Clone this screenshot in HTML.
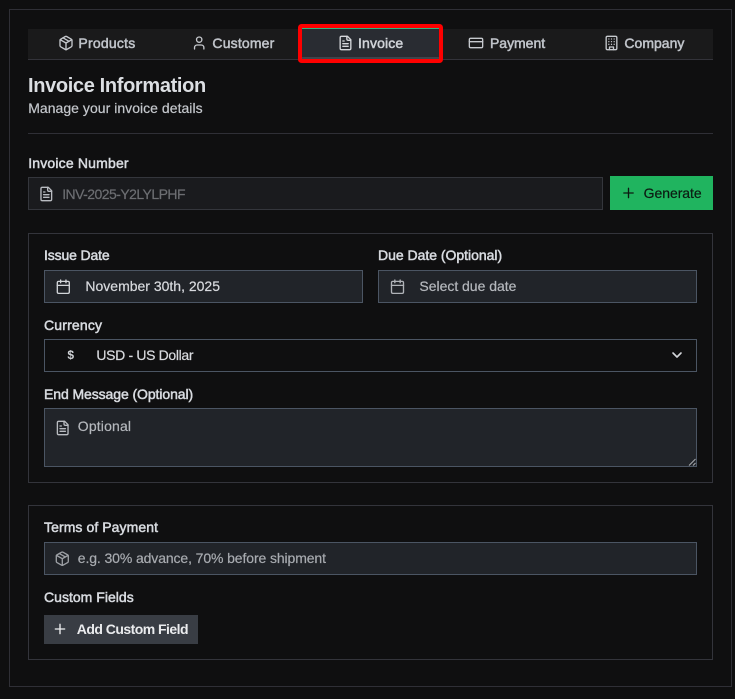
<!DOCTYPE html>
<html lang="en">
<head>
<meta charset="utf-8">
<title>Invoice Information</title>
<style>
html,body{margin:0;padding:0;background:#0f0f10;width:735px;height:699px;overflow:hidden}
svg{display:block;position:absolute;left:0;top:0}
text{font-family:"Liberation Sans",sans-serif;font-size:14px}
.m{stroke-width:.5px;paint-order:stroke}
.r{stroke-width:.2px;paint-order:stroke}
.i{fill:none;stroke-width:2;stroke-linecap:round;stroke-linejoin:round}
</style>
</head>
<body>
<svg width="735" height="699" viewBox="0 0 735 699" xmlns="http://www.w3.org/2000/svg">
<rect x="9.5" y="9.5" width="722" height="677" fill="#0f0f10" stroke="#2f2f36"/>

<!-- Tabs -->
<rect x="28" y="29" width="685" height="30" fill="#1a1a1b"/>
<rect x="28" y="59" width="685" height="1" fill="#33333a"/>

<rect x="302" y="28" width="137" height="31" fill="#292c32"/>
<rect x="302" y="57" width="137" height="2" fill="#3f454c"/>
<rect x="302" y="28" width="137" height="1" fill="#2fb57f"/>
<rect x="300" y="26" width="141" height="35" rx="1.5" fill="none" stroke="#fe0000" stroke-width="4"/>

<g transform="translate(58,35) scale(.6667)" class="i" stroke="#c6c9ce"><path d="M11 21.73a2 2 0 0 0 2 0l7-4A2 2 0 0 0 21 16V8a2 2 0 0 0-1-1.73l-7-4a2 2 0 0 0-2 0l-7 4A2 2 0 0 0 3 8v8a2 2 0 0 0 1 1.73z"/><path d="M12 22V12"/><path d="M3.29 7 12 12l8.71-5"/><path d="m7.5 4.27 9 5.15"/></g>
<text x="78.4" y="48" textLength="56.8" fill="#c0c4ca" stroke="#c0c4ca" class="m">Products</text>

<g transform="translate(191.2,35) scale(.6667)" class="i" stroke="#c6c9ce"><path d="M19 21v-2a4 4 0 0 0-4-4H9a4 4 0 0 0-4 4v2"/><circle cx="12" cy="7" r="4"/></g>
<text x="212.4" y="48" textLength="61.9" fill="#c0c4ca" stroke="#c0c4ca" class="m">Customer</text>

<g transform="translate(337.5,35) scale(.6667)" class="i" stroke="#d6d8dc"><path d="M15 2H6a2 2 0 0 0-2 2v16a2 2 0 0 0 2 2h12a2 2 0 0 0 2-2V7Z"/><path d="M14 2v4a2 2 0 0 0 2 2h4"/><path d="M10 9H8"/><path d="M16 13H8"/><path d="M16 17H8"/></g>
<text x="358" y="48" textLength="45.2" fill="#d0d3d8" stroke="#d0d3d8" class="m">Invoice</text>

<g transform="translate(468,35) scale(.6667)" class="i" stroke="#c6c9ce"><rect x="2" y="5" width="20" height="14" rx="2"/><path d="M2 10h20"/></g>
<text x="490" y="48" textLength="55.1" fill="#c0c4ca" stroke="#c0c4ca" class="m">Payment</text>

<g transform="translate(603.5,35) scale(.6667)" class="i" stroke="#c6c9ce"><rect x="4" y="2" width="16" height="20" rx="2"/><path d="M9 22v-4h6v4"/><path d="M8 6h.01M16 6h.01M12 6h.01M12 10h.01M12 14h.01M16 10h.01M16 14h.01M8 10h.01M8 14h.01"/></g>
<text x="624.4" y="48" textLength="60" fill="#c0c4ca" stroke="#c0c4ca" class="m">Company</text>

<!-- Heading -->
<text x="28" y="92" textLength="178.2" style="font-size:20px;font-weight:700" fill="#dcdfe3">Invoice Information</text>
<text x="28.2" y="113" textLength="174.4" fill="#c4c7cc" stroke="#c4c7cc" class="r">Manage your invoice details</text>
<rect x="28" y="133" width="685" height="1" fill="#2f2f36"/>

<!-- Invoice number -->
<text x="28.2" y="168" textLength="100.4" fill="#d8dbe0" stroke="#d8dbe0" class="m">Invoice Number</text>
<rect x="28.5" y="177.5" width="574" height="32" fill="#1a1b1e" stroke="#34363c"/>
<g transform="translate(38.3,186) scale(.6667)" class="i" stroke="#b9bcc1"><path d="M15 2H6a2 2 0 0 0-2 2v16a2 2 0 0 0 2 2h12a2 2 0 0 0 2-2V7Z"/><path d="M14 2v4a2 2 0 0 0 2 2h4"/><path d="M10 9H8"/><path d="M16 13H8"/><path d="M16 17H8"/></g>
<text x="62.2" y="199" textLength="123.3" fill="#6c6e72" stroke="#6c6e72" class="r">INV-2025-Y2LYLPHF</text>
<rect x="610" y="176" width="103" height="34" fill="#20b45f"/>
<g transform="translate(620.5,185) scale(.6667)" class="i" stroke="#0c1a12"><path d="M5 12h14"/><path d="M12 5v14"/></g>
<text x="643.6" y="198" textLength="58.1" fill="#0c1a12" stroke="#0c1a12" class="r">Generate</text>

<!-- Card 1 -->
<rect x="28.5" y="233.5" width="684" height="249" fill="none" stroke="#33343b"/>

<text x="44" y="260" textLength="65.7" fill="#d8dbe0" stroke="#d8dbe0" class="m">Issue Date</text>
<rect x="44.5" y="270.5" width="318" height="32" fill="#212429" stroke="#4b5563"/>
<g transform="translate(55.3,278.7) scale(.6667)" class="i" stroke="#d2d5d9"><path d="M8 2v4"/><path d="M16 2v4"/><rect x="3" y="4" width="18" height="18" rx="2"/><path d="M3 10h18"/></g>
<text x="85.4" y="291" textLength="134.6" fill="#d8dade" stroke="#d8dade" class="r">November 30th, 2025</text>

<text x="378" y="260" textLength="124.2" fill="#d8dbe0" stroke="#d8dbe0" class="m">Due Date (Optional)</text>
<rect x="378.5" y="270.5" width="318" height="32" fill="#212429" stroke="#4b5563"/>
<g transform="translate(389.5,278.7) scale(.6667)" class="i" stroke="#b0b3b8"><path d="M8 2v4"/><path d="M16 2v4"/><rect x="3" y="4" width="18" height="18" rx="2"/><path d="M3 10h18"/></g>
<text x="419.4" y="291" textLength="97" fill="#b4b7bc" stroke="#b4b7bc" class="r">Select due date</text>

<text x="44" y="330" textLength="58" fill="#d8dbe0" stroke="#d8dbe0" class="m">Currency</text>
<rect x="44.5" y="339.5" width="652" height="32" fill="#0f0f10" stroke="#4b5563"/>
<text x="67.4" y="359" textLength="6.6" style="font-size:12px;font-weight:700" fill="#d0d3d7">$</text>
<text x="96.4" y="360" textLength="97.1" fill="#d8dade" stroke="#d8dade" class="r">USD - US Dollar</text>
<g transform="translate(669,347) scale(.6667)" class="i" stroke="#d4d6da" style="stroke-width:2.4"><path d="m6 9 6 6 6-6"/></g>

<text x="44" y="399" textLength="149.2" fill="#d8dbe0" stroke="#d8dbe0" class="m">End Message (Optional)</text>
<rect x="44.5" y="408.5" width="652" height="58" fill="#212429" stroke="#4b5563"/>
<g transform="translate(54.7,420) scale(.6667)" class="i" stroke="#b9bcc1"><path d="M15 2H6a2 2 0 0 0-2 2v16a2 2 0 0 0 2 2h12a2 2 0 0 0 2-2V7Z"/><path d="M14 2v4a2 2 0 0 0 2 2h4"/><path d="M10 9H8"/><path d="M16 13H8"/><path d="M16 17H8"/></g>
<text x="77.8" y="431" textLength="53.2" fill="#b4b7bc" stroke="#b4b7bc" class="r">Optional</text>
<path d="M689 465.5 695.5 459M693 465.5 695.5 463" stroke="#a9abaf" stroke-width="1" fill="none"/>

<!-- Card 2 -->
<rect x="28.5" y="505.5" width="684" height="154" fill="none" stroke="#33343b"/>

<text x="44" y="532" textLength="114" fill="#d8dbe0" stroke="#d8dbe0" class="m">Terms of Payment</text>
<rect x="44.5" y="542.5" width="652" height="32" fill="#212429" stroke="#4b5563"/>
<g transform="translate(54.3,550.7) scale(.6667)" class="i" stroke="#9da0a5"><path d="M11 21.73a2 2 0 0 0 2 0l7-4A2 2 0 0 0 21 16V8a2 2 0 0 0-1-1.73l-7-4a2 2 0 0 0-2 0l-7 4A2 2 0 0 0 3 8v8a2 2 0 0 0 1 1.73z"/><path d="M12 22V12"/><path d="M3.29 7 12 12l8.71-5"/><path d="m7.5 4.27 9 5.15"/></g>
<text x="77.8" y="563" textLength="248.2" fill="#a8abb0" stroke="#a8abb0" class="r">e.g. 30% advance, 70% before shipment</text>

<text x="44" y="602" textLength="89.7" fill="#d8dbe0" stroke="#d8dbe0" class="m">Custom Fields</text>
<rect x="44" y="615" width="154" height="29" fill="#393d44"/>
<g transform="translate(52,621) scale(.6667)" class="i" stroke="#f0f1f2"><path d="M5 12h14"/><path d="M12 5v14"/></g>
<text x="76.8" y="634" textLength="111.7" style="font-weight:700" fill="#ebecee">Add Custom Field</text>
</svg>
</body>
</html>
